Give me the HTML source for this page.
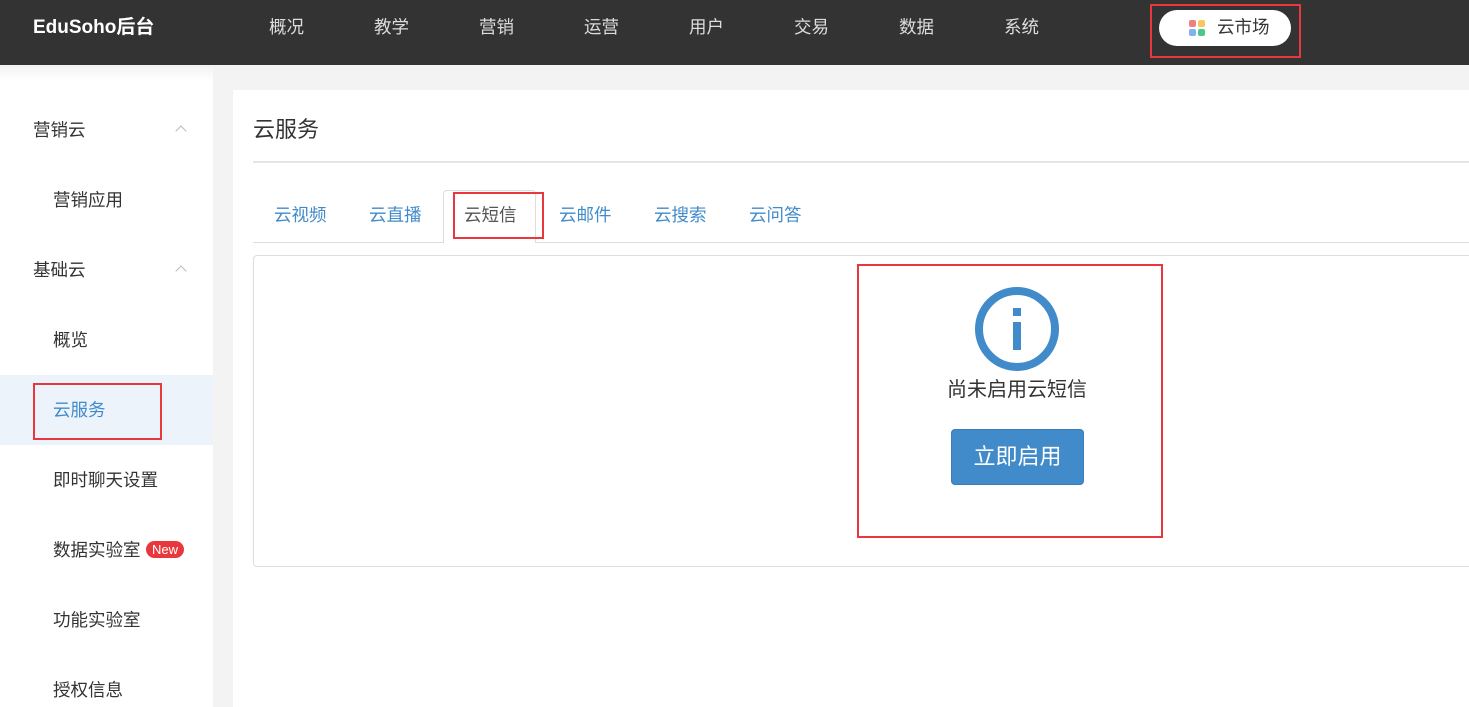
<!DOCTYPE html>
<html><head><meta charset="utf-8"><style>
*{margin:0;padding:0;box-sizing:border-box}
body{width:1469px;height:707px;overflow:hidden;background:#f3f3f3;font-family:"Liberation Sans","Noto Sans CJK SC",sans-serif;position:relative;color:#333;line-height:1}
.abs{position:absolute}
.top{left:0;top:0;width:1469px;height:65px;background:#333}
.nav{top:19px;font-size:17.5px;color:#ddd}
.side{left:0;top:65px;width:213px;height:642px;background:#fff}
.si{font-size:17.5px;color:#333;position:absolute}
.chev{position:absolute;left:177px;width:8px;height:8px;border-left:1.5px solid #bbb;border-top:1.5px solid #bbb;transform:rotate(45deg)}
.red{position:absolute;border:2px solid #e8383d}
.tab{position:absolute;top:207px;font-size:17.5px;color:#428bca}
</style></head><body>
<div class="abs top"></div>
<div class="abs" style="left:33px;top:18px;font-size:19px;color:#fff;font-weight:bold">EduSoho后台</div>
<div class="abs nav" style="left:269px">概况</div>
<div class="abs nav" style="left:374px">教学</div>
<div class="abs nav" style="left:479px">营销</div>
<div class="abs nav" style="left:584px">运营</div>
<div class="abs nav" style="left:689px">用户</div>
<div class="abs nav" style="left:794px">交易</div>
<div class="abs nav" style="left:899px">数据</div>
<div class="abs nav" style="left:1004px">系统</div>
<div class="abs" style="left:1159px;top:10px;width:132px;height:36px;background:#fff;border-radius:18px"></div>
<div class="abs" style="left:1189px;top:20px;width:7px;height:7px;background:#f08080;border-radius:2px"></div>
<div class="abs" style="left:1198px;top:20px;width:7px;height:7px;background:#f7c95c;border-radius:2px"></div>
<div class="abs" style="left:1189px;top:29px;width:7px;height:7px;background:#7fb3f0;border-radius:2px"></div>
<div class="abs" style="left:1198px;top:29px;width:7px;height:7px;background:#4cc98a;border-radius:2px"></div>
<div class="abs" style="left:1217px;top:19px;font-size:17.5px;color:#333">云市场</div>
<div class="red" style="left:1150px;top:4px;width:151px;height:54px"></div>

<div class="abs side"></div>
<div class="abs" style="left:0;top:65px;width:213px;height:16px;background:linear-gradient(#f2f2f2,#fff)"></div>
<div class="si" style="left:33px;top:122px">营销云</div>
<div class="chev" style="top:127px"></div>
<div class="si" style="left:53px;top:192px">营销应用</div>
<div class="si" style="left:33px;top:262px">基础云</div>
<div class="chev" style="top:267px"></div>
<div class="si" style="left:53px;top:332px">概览</div>
<div class="abs" style="left:0;top:375px;width:213px;height:70px;background:#edf3fa"></div>
<div class="si" style="left:53px;top:402px;color:#428bca">云服务</div>
<div class="red" style="left:33px;top:383px;width:129px;height:57px"></div>
<div class="si" style="left:53px;top:472px">即时聊天设置</div>
<div class="si" style="left:53px;top:542px">数据实验室</div>
<div class="abs" style="left:146px;top:541px;width:38px;height:17px;background:#e8383d;border-radius:9px;color:#fff;font-size:13px;text-align:center;line-height:17px">New</div>
<div class="si" style="left:53px;top:612px">功能实验室</div>
<div class="si" style="left:53px;top:682px">授权信息</div>

<div class="abs" style="left:233px;top:90px;width:1236px;height:617px;background:#fff"></div>
<div class="abs" style="left:253px;top:119px;font-size:22px;color:#333">云服务</div>
<div class="abs" style="left:253px;top:161px;width:1216px;height:2px;background:#e5e5e5"></div>
<div class="abs" style="left:253px;top:242px;width:1216px;height:1px;background:#ddd"></div>
<div class="abs" style="left:443px;top:190px;width:93px;height:53px;background:#fff;border:1px solid #ddd;border-bottom:none;border-radius:4px 4px 0 0"></div>
<div class="tab" style="left:274px">云视频</div>
<div class="tab" style="left:369px">云直播</div>
<div class="tab" style="left:464px;color:#555">云短信</div>
<div class="tab" style="left:559px">云邮件</div>
<div class="tab" style="left:654px">云搜索</div>
<div class="tab" style="left:749px">云问答</div>
<div class="red" style="left:453px;top:192px;width:91px;height:47px"></div>

<div class="abs" style="left:253px;top:255px;width:1230px;height:312px;border:1px solid #ddd;border-radius:4px"></div>
<svg class="abs" style="left:974px;top:286px" width="86" height="86"><circle cx="43" cy="43" r="38" fill="none" stroke="#428bca" stroke-width="8"/><rect x="39" y="22" width="8" height="8" fill="#428bca"/><rect x="39" y="36" width="8" height="28" fill="#428bca"/></svg>
<div class="abs" style="left:857px;top:380px;width:320px;text-align:center;font-size:20px;color:#333">尚未启用云短信</div>
<div class="abs" style="left:951px;top:429px;width:133px;height:56px;background:#428bca;border:1px solid #3a7dbb;border-radius:4px;color:#fff;font-size:22px;text-align:center;line-height:54px">立即启用</div>
<div class="red" style="left:857px;top:264px;width:306px;height:274px"></div>
</body></html>
